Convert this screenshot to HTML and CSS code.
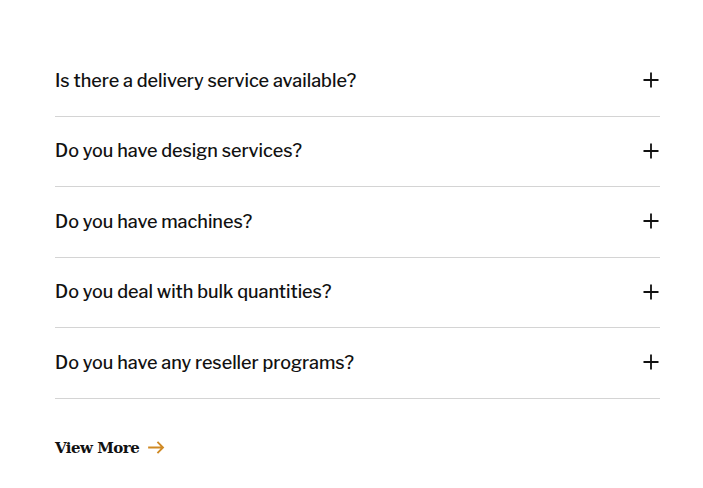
FILE: index.html
```html
<!DOCTYPE html>
<html>
<head>
<meta charset="utf-8">
<link rel="stylesheet" href="styles.css">
</head>
<body>
<div class="faq">
  <div class="item"><span class="q">Is there a delivery service available?</span><svg class="plus" viewBox="0 0 16 16"><path d="M8 0.5V15.5M0.5 8H15.5" stroke="#111" stroke-width="1.8" fill="none"/></svg></div>
  <div class="item"><span class="q">Do you have design services?</span><svg class="plus" viewBox="0 0 16 16"><path d="M8 0.5V15.5M0.5 8H15.5" stroke="#111" stroke-width="1.8" fill="none"/></svg></div>
  <div class="item"><span class="q">Do you have machines?</span><svg class="plus" viewBox="0 0 16 16"><path d="M8 0.5V15.5M0.5 8H15.5" stroke="#111" stroke-width="1.8" fill="none"/></svg></div>
  <div class="item"><span class="q">Do you deal with bulk quantities?</span><svg class="plus" viewBox="0 0 16 16"><path d="M8 0.5V15.5M0.5 8H15.5" stroke="#111" stroke-width="1.8" fill="none"/></svg></div>
  <div class="item"><span class="q">Do you have any reseller programs?</span><svg class="plus" viewBox="0 0 16 16"><path d="M8 0.5V15.5M0.5 8H15.5" stroke="#111" stroke-width="1.8" fill="none"/></svg></div>
  <a class="more" href="#">View More <svg class="arrow" viewBox="0 0 18 14"><path d="M0 7H16M10 1L16 7L10 13" stroke="#d08a25" stroke-width="2" fill="none"/></svg></a>
</div>
</body>
</html>
```
FILE: styles.css
```css
html, body { margin: 0; padding: 0; background: #fff; }
.faq {
  width: 605px;
  margin-left: 55px;
  padding-top: 46px;
  display: flex;
  flex-direction: column;
}
.item {
  box-sizing: border-box;
  height: 70.5px;
  border-bottom: 1px solid #d4d4d4;
  display: flex;
  align-items: center;
  justify-content: space-between;
  padding-bottom: 1px;
}
.q {
  font-family: "Libre Franklin", "Inter", "Noto Sans", sans-serif;
  font-size: 18px;
  font-weight: 500;
  color: #111;
  letter-spacing: 0;
}
.plus { width: 16px; height: 16px; margin-right: 1px; }
.more {
  margin-top: 40px;
  display: flex;
  align-items: center;
  gap: 9px;
  font-family: "DejaVu Serif", serif;
  font-weight: bold;
  font-size: 15px;
  color: #111;
  text-decoration: none;
  letter-spacing: -0.5px;
}
.arrow { width: 17px; height: 13px; }
```
